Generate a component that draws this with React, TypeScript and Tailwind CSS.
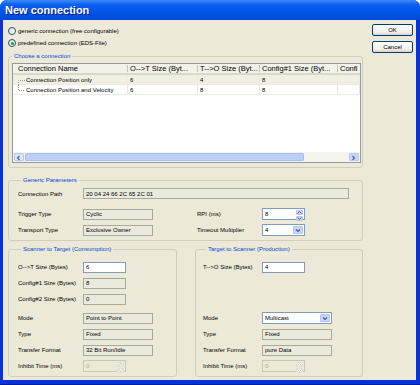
import clsx from "clsx";
import { ReactNode } from "react";

type Kind = "edit" | "ro" | "off";

const boxKind: Record<Kind, string> = {
  edit: "bg-white border-[#7f9db9] text-black",
  ro: "bg-[#ebe9dc] border-[#a9a89c] text-black",
  off: "bg-[#ece9d8] border-[#c9c7ba] text-[#aca899]",
};

function Box({ value, w, kind = "ro" }: { value: string; w: string; kind?: Kind }) {
  return (
    <div className={clsx("h-[11px] border flex items-center px-[2px] whitespace-nowrap", w, boxKind[kind])}>
      {value}
    </div>
  );
}

function Arrow({ dir, color = "#4d6185" }: { dir: "up" | "down" | "left" | "right"; color?: string }) {
  const d = {
    up: "M1 3.5 L3 1.5 L5 3.5",
    down: "M1 1.5 L3 3.5 L5 1.5",
    left: "M3.5 1 L1.5 3 L3.5 5",
    right: "M1.5 1 L3.5 3 L1.5 5",
  }[dir];
  return (
    <svg width="6" height="5" viewBox="0 0 6 5" className="block">
      <path d={d} fill="none" stroke={color} strokeWidth="1.2" />
    </svg>
  );
}

function Spin({ value, disabled }: { value: string; disabled?: boolean }) {
  return (
    <div
      className={clsx(
        "w-[43px] h-[12px] border flex",
        disabled ? "bg-[#ece9d8] border-[#c9c7ba] text-[#aca899]" : "bg-white border-[#7f9db9]"
      )}
    >
      <div className="flex-1 flex items-center px-[2px]">{value}</div>
      <div className="w-[9px] flex flex-col p-px gap-px">
        {(["up", "down"] as const).map((d) => (
          <div
            key={d}
            className={clsx(
              "flex-1 flex items-center justify-center rounded-[1px] border",
              disabled ? "bg-[#f4f3ee] border-[#e0ded3]" : "bg-[#c6d6fb] border-[#b4c6f2]"
            )}
          >
            <svg width="5" height="3" viewBox="0 0 5 3" className="block">
              <path
                d={d === "up" ? "M0.5 2.5 L2.5 0.5 L4.5 2.5" : "M0.5 0.5 L2.5 2.5 L4.5 0.5"}
                fill="none"
                stroke={disabled ? "#c9c7ba" : "#4d6185"}
                strokeWidth="1"
              />
            </svg>
          </div>
        ))}
      </div>
    </div>
  );
}

function Select({ value, w }: { value: string; w: string }) {
  return (
    <div className={clsx("h-[12px] border border-[#7f9db9] bg-white flex", w)}>
      <div className="flex-1 flex items-center px-[2px]">{value}</div>
      <div className="w-[10px] m-px rounded-[1px] bg-[#c6d6fb] border border-[#b4c6f2] flex items-center justify-center">
        <Arrow dir="down" />
      </div>
    </div>
  );
}

function Group({ title, className, children }: { title: string; className?: string; children: ReactNode }) {
  return (
    <fieldset className={clsx("border border-[#d0d0bf] rounded-[3px] min-w-0", className)}>
      <legend className="ml-[3px] px-[2px] leading-[10px] text-[#0046d5]">{title}</legend>
      {children}
    </fieldset>
  );
}

function Row({ label, lw, children }: { label?: string; lw: string; children?: ReactNode }) {
  return (
    <div className="h-[16px] flex items-center">
      <div className={clsx("shrink-0 whitespace-nowrap", lw)}>{label}</div>
      {children}
    </div>
  );
}

function Radio({ checked, label }: { checked?: boolean; label: string }) {
  return (
    <div className="h-[12px] flex items-center gap-[2px]">
      <span className="w-[8px] h-[8px] rounded-full border border-[#1c5180] bg-[linear-gradient(135deg,#dcdcd4,#ffffff)] flex items-center justify-center">
        {checked && <span className="w-[3px] h-[3px] rounded-full bg-[#21a121]" />}
      </span>
      <span>{label}</span>
    </div>
  );
}

const cols = ["w-[115px]", "w-[70px]", "w-[62px]", "w-[78px]", "flex-1"];
const heads = ["Connection Name", "O-->T Size (Byt...", "T-->O Size (Byt...", "Config#1 Size (Byt...", "Confi"];
const rows = [
  ["Connection Position only", "6", "4", "8", ""],
  ["Connection Position and Velocity", "6", "8", "8", ""],
];

function Tree({ last }: { last?: boolean }) {
  return (
    <svg width="13" height="10" viewBox="0 0 13 10" className="block shrink-0">
      <path
        d={last ? "M5.5 0 V5.5 H12" : "M5.5 10 V5.5 H12"}
        fill="none"
        stroke="#a0a0a0"
        strokeWidth="1"
        strokeDasharray="1 1"
      />
    </svg>
  );
}

function ConnectionTable() {
  return (
    <div className="ml-[3px] mt-[2px] w-[349px] h-[100px] border border-[#919b9c] bg-white flex flex-col">
      <div className="h-[11px] flex bg-[#f3f2ea] border-b-2 border-[#dcd8c8] text-[7.5px]">
        {heads.map((h, i) => (
          <div key={h} className={clsx("flex items-center overflow-hidden whitespace-nowrap", cols[i])}>
            <span className={clsx("flex-1", i === 0 ? "pl-[5px]" : "pl-[2px]")}>{h}</span>
            {i < 4 && <span className="w-px h-[7px] bg-[#c7c5b2] shrink-0" />}
          </div>
        ))}
      </div>
      {rows.map((r, ri) => (
        <div key={r[0]} className={clsx("h-[10px] flex border-b border-[#eceae0]", ri === 0 && "bg-[#f1efe2]")}>
          {r.map((c, i) => (
            <div key={i} className={clsx("flex items-center border-r border-[#eceae0] whitespace-nowrap", cols[i])}>
              {i === 0 ? (
                <>
                  <Tree last={ri === 1} />
                  <span>{c}</span>
                </>
              ) : (
                <span className="pl-[2px]">{c}</span>
              )}
            </div>
          ))}
        </div>
      ))}
      <div className="flex-1" />
      <div className="h-[10px] flex bg-[#f4f3ee]">
        <div className="w-[10px] m-px rounded-[1px] bg-[#dbe3f6] border border-[#b4c6f2] flex items-center justify-center">
          <Arrow dir="left" />
        </div>
        <div className="w-[279px] my-px rounded-[1px] bg-[#bccffb] border border-[#a8bff2]" />
        <div className="flex-1" />
        <div className="w-[10px] m-px rounded-[1px] bg-[#c6d6fb] border border-[#b4c6f2] flex items-center justify-center">
          <Arrow dir="right" />
        </div>
      </div>
    </div>
  );
}

function Button({ children }: { children: ReactNode }) {
  return (
    <div className="w-[41px] h-[12px] rounded-[2px] border border-[#003c74] bg-[linear-gradient(#ffffff,#f3f2ec_70%,#d6d0c5)] flex items-center justify-center">
      {children}
    </div>
  );
}

export default function App() {
  return (
    <div className="w-[420px] h-[385px] flex flex-col bg-[#0831d9] rounded-t-[7px] overflow-hidden font-['Liberation_Sans',Arial,sans-serif] text-[6px] text-black leading-none">
      <div className="h-[20px] shrink-0 flex items-center pl-[5px] bg-[linear-gradient(#3b8cf7,#0a5ef0_25%,#0055e8_60%,#0148d6)] text-white text-[11px] font-bold [text-shadow:1px_1px_#0a1883]">
        New connection
      </div>
      <div className="flex-1 flex pl-[3px] pr-[4px] pb-[4px] border-b border-[#001ea0]">
        <div className="flex-1 flex bg-[#ece9d8] pt-[4px] pl-[5px]">
          <div className="w-[355px] flex flex-col">
            <div className="mt-px">
              <Radio label="generic connection (free configurable)" />
              <Radio checked label="predefined connection (EDS-File)" />
            </div>
            <Group title="Choose a connection" className="mt-[2px] h-[117px]">
              <ConnectionTable />
            </Group>
            <Group title="Generic Parameters" className="mt-[7px] pl-[9px]">
              <div className="h-[15px] mt-px flex items-center">
                <div className="w-[65px]">Connection Path</div>
                <Box w="w-[266px]" value="20 04 24 66 2C 65 2C 01" />
              </div>
              <div className="mt-[5px] flex">
                <div className="w-[179px]">
                  <Row label="Trigger Type" lw="w-[65px]">
                    <Box w="w-[70px]" value="Cyclic" />
                  </Row>
                  <Row label="Transport Type" lw="w-[65px]">
                    <Box w="w-[70px]" value="Exclusive Owner" />
                  </Row>
                </div>
                <div>
                  <Row label="RPI (ms)" lw="w-[65px]">
                    <Spin value="8" />
                  </Row>
                  <Row label="Timeout Multiplier" lw="w-[65px]">
                    <Select w="w-[43px]" value="4" />
                  </Row>
                </div>
              </div>
              <div className="h-[2px]" />
            </Group>
            <div className="mt-[3px] flex gap-[18px]">
              <Group title="Scanner to Target (Consumption)" className="w-[169px] pl-[9px] pt-[5px] pb-[2px]">
                <Row label="O-->T Size (Bytes)" lw="w-[65px]">
                  <Box kind="edit" w="w-[43px]" value="6" />
                </Row>
                <Row label="Config#1 Size (Bytes)" lw="w-[65px]">
                  <Box w="w-[43px]" value="8" />
                </Row>
                <Row label="Config#2 Size (Bytes)" lw="w-[65px]">
                  <Box w="w-[43px]" value="0" />
                </Row>
                <div className="h-[3px]" />
                <Row label="Mode" lw="w-[65px]">
                  <Box w="w-[70px]" value="Point to Point" />
                </Row>
                <Row label="Type" lw="w-[65px]">
                  <Box w="w-[70px]" value="Fixed" />
                </Row>
                <Row label="Transfer Format" lw="w-[65px]">
                  <Box w="w-[70px]" value="32 Bit Run/Idle" />
                </Row>
                <Row label="Inhibit Time (ms)" lw="w-[65px]">
                  <Spin disabled value="0" />
                </Row>
              </Group>
              <Group title="Target to Scanner (Production)" className="w-[168px] pl-[7px] pt-[5px] pb-[2px]">
                <Row label="T-->O Size (Bytes)" lw="w-[59px]">
                  <Box kind="edit" w="w-[43px]" value="4" />
                </Row>
                <Row lw="w-[59px]" />
                <Row lw="w-[59px]" />
                <div className="h-[3px]" />
                <Row label="Mode" lw="w-[59px]">
                  <Select w="w-[70px]" value="Multicast" />
                </Row>
                <Row label="Type" lw="w-[59px]">
                  <Box w="w-[70px]" value="Fixed" />
                </Row>
                <Row label="Transfer Format" lw="w-[59px]">
                  <Box w="w-[70px]" value="pure Data" />
                </Row>
                <Row label="Inhibit Time (ms)" lw="w-[59px]">
                  <Spin disabled value="0" />
                </Row>
              </Group>
            </div>
          </div>
          <div className="ml-[9px] flex flex-col gap-[5px]">
            <Button>OK</Button>
            <Button>Cancel</Button>
          </div>
        </div>
      </div>
    </div>
  );
}
